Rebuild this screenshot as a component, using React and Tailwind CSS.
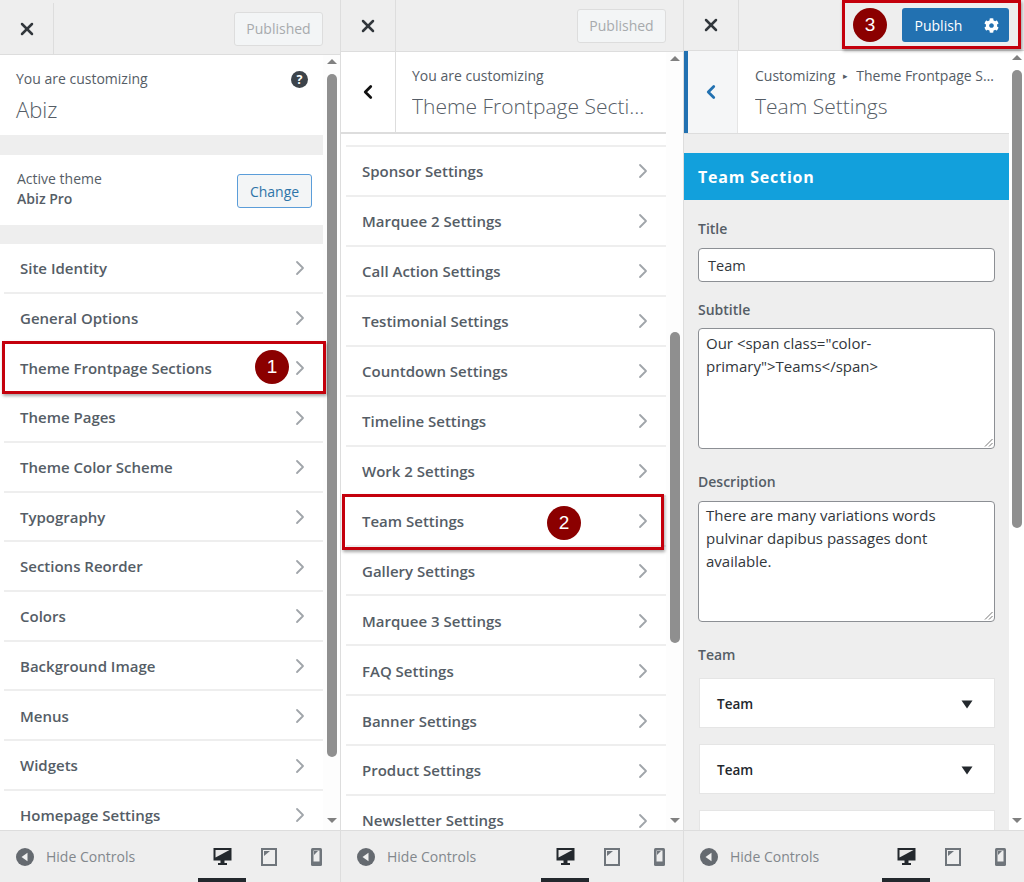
import React from "react";
import { ChevronRight, ChevronLeft, X } from "lucide-react";
import { FaCog } from "react-icons/fa";

const font = "font-['Open_Sans',sans-serif]";

function Row({ label, h }) {
  return (
    <div className={`ml-[4px] flex items-center justify-between border-b-2 border-[#eeeeee] pl-[16px] pr-[11.5px] pt-[1px] shrink-0 ${h}`}>
      <span className="text-[15px] font-semibold text-[#555d66] whitespace-nowrap">{label}</span>
      <ChevronRight size={24} strokeWidth={1.8} className="text-[#a0a5aa]" />
    </div>
  );
}

function Header({ h, right, btnW = "w-[53px]", pad = "" }) {
  return (
    <div className={`flex items-center justify-between bg-[#eeeeee] border-b border-[#dddddd] shrink-0 ${h} ${pad}`}>
      <div className={`flex h-full items-center justify-center border-r border-[#dddddd] ${btnW}`}>
        <X size={20} strokeWidth={3} className="text-[#32373c]" />
      </div>
      {right}
    </div>
  );
}

function Published({ mr }) {
  return (
    <div className={`flex h-[34px] w-[89px] items-center justify-center rounded-[3px] border border-[#dddddd] bg-[#f3f5f6] text-[14px] text-[#a7aaad] ${mr}`}>
      Published
    </div>
  );
}

function Footer() {
  return (
    <div className="flex h-[52px] shrink-0 items-center border-t border-[#dddddd] bg-[#eeeeee] pl-[16px]">
      <svg width="18" height="18" viewBox="0 0 18 18">
        <circle cx="9" cy="9" r="9" fill="#656a70" />
        <path d="M11.5 4.8 L5.5 9 L11.5 13.2 Z" fill="#f0f0f0" />
      </svg>
      <span className="ml-[12px] text-[14px] text-[#82878c]">Hide Controls</span>
      <div className="ml-auto flex items-center">
        <div className="relative flex h-[51px] w-[48px] items-center justify-center">
          <svg width="19" height="19" viewBox="0 0 19 19">
            <path d="M0.5 1 H18.5 V13.5 H11.5 V16 H14 V18 H5 V16 H7.5 V13.5 H0.5 Z" fill="#23282d" />
            <path d="M2.5 3 H16.5 L2.5 10.5 Z" fill="#e8e8e8" />
          </svg>
          <div className="absolute bottom-0 left-0 h-[4px] w-[48px] bg-[#23282d]" />
        </div>
        <div className="flex w-[46px] items-center justify-center">
          <svg width="16" height="18" viewBox="0 0 16 18">
            <rect x="1" y="1" width="14" height="16" fill="none" stroke="#6f757b" strokeWidth="2" />
            <path d="M3 3 H9 L3 8 Z" fill="#6f757b" />
          </svg>
        </div>
        <div className="flex w-[48px] items-center justify-center">
          <svg width="11" height="18" viewBox="0 0 11 18">
            <rect x="0" y="0" width="11" height="18" rx="1.5" fill="#6f757b" />
            <rect x="2.5" y="2.5" width="6" height="11" fill="#eeeeee" />
            <path d="M3 3 H7 L3 7 Z" fill="#6f757b" />
          </svg>
        </div>
      </div>
    </div>
  );
}

function Scrollbar({ thumbH, w = "w-[17px]", bg = "bg-[#fdfdfd]" }) {
  return (
    <div className={`flex shrink-0 flex-col items-center ${w} ${bg}`}>
      <div className="mt-[4px] h-0 w-0 border-x-[5px] border-b-[5px] border-x-transparent border-b-[#808080]" />
      <div className={`mt-[10px] w-[10px] rounded-[5px] bg-[#8f8f8f] ${thumbH}`} />
      <div className="mt-auto mb-[7px] h-0 w-0 border-x-[5px] border-t-[5px] border-x-transparent border-t-[#808080]" />
    </div>
  );
}

function Badge({ n, cls }) {
  return (
    <div className={`absolute flex h-[34px] w-[34px] items-center justify-center rounded-full bg-[#8b0000] text-[19px] text-white font-['Liberation_Sans',sans-serif] ${cls}`}>
      {n}
    </div>
  );
}

const list1 = ["Site Identity","General Options","Theme Frontpage Sections","Theme Pages","Theme Color Scheme","Typography","Sections Reorder","Colors","Background Image","Menus","Widgets","Homepage Settings"];
const list2 = ["Sponsor Settings","Marquee 2 Settings","Call Action Settings","Testimonial Settings","Countdown Settings","Timeline Settings","Work 2 Settings","Team Settings","Gallery Settings","Marquee 3 Settings","FAQ Settings","Banner Settings","Product Settings","Newsletter Settings"];

function PanelOne() {
  return (
    <div className="relative flex h-full w-[341px] shrink-0 flex-col border-r border-[#dddddd]">
      <Header h="h-[55px]" pad="pt-[3px]" btnW="w-[54px]" right={<Published mr="mr-[17px]" />} />
      <div className="flex min-h-0 flex-1">
        <div className="min-w-0 flex-1 overflow-hidden bg-white">
          <div className="flex h-[80px] items-start justify-between pl-[16px] pr-[15px] pt-[14px]">
            <div>
              <div className="text-[14px] leading-[20px] text-[#555d66]">You are customizing</div>
              <div className="mt-[5px] text-[22px] leading-[30px] font-light text-[#555d66]">Abiz</div>
            </div>
            <svg className="mt-[2px]" width="17" height="17" viewBox="0 0 17 17">
              <circle cx="8.5" cy="8.5" r="8.5" fill="#3c434a" />
              <text x="8.5" y="13" textAnchor="middle" fontSize="12.5" fontWeight="700" fill="#fff" fontFamily="Open Sans">?</text>
            </svg>
          </div>
          <div className="h-[20px] bg-[#eeeeee]" />
          <div className="flex h-[70px] items-center justify-between pl-[17px] pr-[11px]">
            <div className="-mt-[2px] text-[14px] leading-[20px] text-[#555d66]">
              <div>Active theme</div>
              <div className="font-semibold">Abiz Pro</div>
            </div>
            <div className="mt-[2px] flex h-[34px] w-[75px] items-center justify-center rounded-[3px] border border-[#5b9dd9] bg-[#f3f5f6] text-[14px] text-[#2e74a8]">Change</div>
          </div>
          <div className="h-[19px] bg-[#eeeeee]" />
          {list1.map((l) => <Row key={l} label={l} h="h-[49.73px]" />)}
        </div>
        <Scrollbar thumbH="h-[683px]" />
      </div>
      <Footer />
      <div className="pointer-events-none absolute left-[2px] top-[341px] h-[53px] w-[324px] border-[3px] border-[#c4000c] shadow-[1px_2px_3px_rgba(0,0,0,0.35)]" />
      <Badge n="1" cls="left-[255px] top-[350px]" />
    </div>
  );
}

function PanelTwo() {
  return (
    <div className="relative flex h-full w-[343px] shrink-0 flex-col border-r border-[#dddddd]">
      <Header h="h-[52px]" btnW="w-[55px]" right={<Published mr="mr-[17px]" />} />
      <div className="flex min-h-0 flex-1">
        <div className="min-w-0 flex-1 overflow-hidden bg-white">
          <div className="flex h-[82px] border-b-2 border-[#dddddd]">
            <div className="flex w-[55px] shrink-0 items-center justify-center border-r border-[#dddddd]">
              <ChevronLeft size={22} strokeWidth={3} className="text-[#111111]" />
            </div>
            <div className="min-w-0 flex-1 pl-[16px] pt-[14px] pr-[16px]">
              <div className="text-[14px] leading-[20px] text-[#555d66]">You are customizing</div>
              <div className="mt-[5px] truncate text-[21px] leading-[30px] font-light text-[#555d66]">Theme Frontpage Sections</div>
            </div>
          </div>
          <div className="ml-[5px] h-[13px] border-b-2 border-[#eeeeee]" />
          <div className="pl-[1px]">
            {list2.map((l) => <Row key={l} label={l} h="h-[49.95px]" />)}
          </div>
        </div>
        <Scrollbar thumbH="mt-[271px] h-[311px]" />
      </div>
      <Footer />
      <div className="pointer-events-none absolute left-[1px] top-[494px] h-[56px] w-[322px] border-[3px] border-[#c4000c] shadow-[1px_2px_3px_rgba(0,0,0,0.35)]" />
      <Badge n="2" cls="left-[206px] top-[506px]" />
    </div>
  );
}

function Field({ label, children, mt }) {
  return (
    <div className={`px-[14px] ${mt}`}>
      <div className="text-[14px] font-semibold leading-[20px] text-[#555d66]">{label}</div>
      {children}
    </div>
  );
}

function TextBox({ text, h, mt = "mt-[8px]", py = "pt-[3px]" }) {
  return (
    <div className={`relative rounded-[4px] border border-[#8c8f94] bg-white px-[7px] text-[15px] leading-[23px] text-[#32373c] ${py} ${h} ${mt}`}>
      {text}
      <svg className="absolute bottom-[1px] right-[1px]" width="9" height="9" viewBox="0 0 9 9">
        <path d="M8.5 1 L1 8.5 M8.5 5 L5 8.5" stroke="#777" strokeWidth="1" />
      </svg>
    </div>
  );
}

function Card({ mt, label }) {
  return (
    <div className={`ml-[1px] flex h-[50px] items-center justify-between border border-[#e5e5e5] bg-white pl-[17px] pr-[21px] pt-[2px] text-[13.5px] font-semibold text-[#23282d] ${mt}`}>
      {label && <span>{label}</span>}
      {label && <svg width="12" height="9" viewBox="0 0 12 9"><path d="M0.5 0.5 H11.5 L6 8.5 Z" fill="#23282d" /></svg>}
    </div>
  );
}

function PanelThree() {
  return (
    <div className="relative flex h-full min-w-0 flex-1 flex-col">
      <div className="flex h-[51px] shrink-0 items-center justify-between border-b border-[#dddddd] bg-[#eeeeee]">
        <div className="flex h-full w-[55px] items-center justify-center border-r border-[#dddddd]">
          <X size={20} strokeWidth={3} className="text-[#32373c]" />
        </div>
        <div className="mr-[15px] flex h-[34px] w-[107px] items-center rounded-[3px] bg-[#2271b1] text-white">
          <span className="w-[72px] pl-[1px] text-center text-[14px]">Publish</span>
          <FaCog size={15} className="ml-[10px]" />
        </div>
      </div>
      <div className="flex min-h-0 flex-1">
        <div className="min-w-0 flex-1 overflow-hidden bg-[#eeeeee]">
          <div className="flex h-[83px] border-b border-[#dddddd] bg-white">
            <div className="flex w-[54px] shrink-0 items-center justify-center border-l-[4px] border-r border-l-[#2271b1] border-r-[#e5e5e5] bg-[#f5f6f7]">
              <ChevronLeft size={22} strokeWidth={3} className="-ml-[4px] text-[#2271b1]" />
            </div>
            <div className="min-w-0 flex-1 pl-[17px] pr-[12px] pt-[15px]">
              <div className="flex text-[14px] leading-[20px] text-[#555d66]">
                <span>Customizing</span>
                <span className="mx-[8px] text-[9px]">▸</span>
                <span className="min-w-0 flex-1 truncate">Theme Frontpage Sections</span>
              </div>
              <div className="mt-[5px] truncate text-[21px] leading-[30px] font-light text-[#555d66]">Team Settings</div>
            </div>
          </div>
          <div className="mt-[19px] flex h-[47px] items-center bg-[#12a0dc] pl-[14px] text-[16px] font-bold tracking-[0.8px] text-white">Team Section</div>
          <Field label="Title" mt="mt-[19px]">
            <div className="mt-[9px] flex h-[34px] items-center rounded-[4px] border border-[#8c8f94] bg-white px-[9px] pt-[1px] text-[14.5px] text-[#32373c]">Team</div>
          </Field>
          <Field label="Subtitle" mt="mt-[18px]">
            <TextBox h="h-[121px]" text={<>Our &lt;span class="color-<br />primary"&gt;Teams&lt;/span&gt;</>} />
          </Field>
          <Field label="Description" mt="mt-[23px]">
            <TextBox h="h-[121px]" mt="mt-[9px]" py="pt-[2px]" text={<>There are many variations words<br />pulvinar dapibus passages dont<br />available.</>} />
          </Field>
          <Field label="Team" mt="mt-[23px]">
            <Card mt="mt-[13px]" label="Team" />
            <Card mt="mt-[16px]" label="Team" />
            <Card mt="mt-[16px]" />
          </Field>
        </div>
        <Scrollbar w="w-[15px]" thumbH="h-[458px]" bg="bg-[#ffffff]" />
      </div>
      <Footer />
      <div className="pointer-events-none absolute left-[158px] top-0 h-[49px] w-[179px] border-[3px] border-[#c4000c] shadow-[1px_2px_3px_rgba(0,0,0,0.35)]" />
      <Badge n="3" cls="left-[169px] top-[8px]" />
    </div>
  );
}

export default function App() {
  return (
    <div className={`flex h-[882px] w-[1024px] overflow-hidden bg-white ${font}`}>
      <PanelOne />
      <PanelTwo />
      <PanelThree />
    </div>
  );
}
